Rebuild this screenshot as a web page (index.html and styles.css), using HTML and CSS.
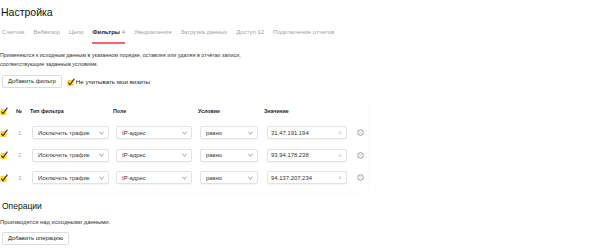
FILE: index.html
```html
<!DOCTYPE html>
<html lang="ru">
<head>
<meta charset="utf-8">
<title>Настройка</title>
<link rel="stylesheet" href="styles.css">
</head>
<body>
<div class="page">
  <h1 class="title">Настройка</h1>
  <nav class="tabs">
    <span class="tab">Счетчик</span>
    <span class="tab">Вебвизор</span>
    <span class="tab">Цели</span>
    <span class="tab active">Фильтры <span class="count">4</span></span>
    <span class="tab">Уведомления</span>
    <span class="tab">Загрузка данных</span>
    <span class="tab">Доступ <span class="count">12</span></span>
    <span class="tab">Подключение отчетов</span>
  </nav>

  <p class="desc filters-desc">Применяются к исходным данным в указанном порядке, оставляя или удаляя в отчётах записи, соответствующие заданным условиям.</p>

  <div class="controls">
    <button class="btn">Добавить фильтр</button>
    <label class="check-label">
      <span class="cb"><svg viewBox="0 0 8 8" width="8" height="8"><rect x="0.5" y="2" width="6" height="6" fill="#ffd333"/><path d="M1.3 4.6 L3 6.6 L7.4 0.6" fill="none" stroke="#3b3320" stroke-width="1.1"/></svg></span>
      Не учитывать мои визиты
    </label>
  </div>

  <div class="panel">
    <div class="grid">
      <div class="cell"><span class="cb"><svg viewBox="0 0 8 8" width="8" height="8"><rect x="0.5" y="2" width="6" height="6" fill="#ffd333"/><path d="M1.3 4.6 L3 6.6 L7.4 0.6" fill="none" stroke="#3b3320" stroke-width="1.1"/></svg></span></div>
      <div class="cell head">№</div>
      <div class="cell head">Тип фильтра</div>
      <div class="cell head">Поле</div>
      <div class="cell head">Условие</div>
      <div class="cell head">Значение</div>
      <div class="cell"></div>

      <div class="cell row"><span class="cb"><svg viewBox="0 0 8 8" width="8" height="8"><rect x="0.5" y="2" width="6" height="6" fill="#ffd333"/><path d="M1.3 4.6 L3 6.6 L7.4 0.6" fill="none" stroke="#3b3320" stroke-width="1.1"/></svg></span></div>
      <div class="cell row num">1</div>
      <div class="cell row"><div class="select w-type"><span class="val">Исключить трафик</span><svg class="arrow" viewBox="0 0 6 4" width="5" height="4"><path d="M0.5 0.8 L3 3.2 L5.5 0.8" fill="none" stroke="#555" stroke-width="0.8"/></svg></div></div>
      <div class="cell row"><div class="select w-field"><span class="val">IP-адрес</span><svg class="arrow" viewBox="0 0 6 4" width="5" height="4"><path d="M0.5 0.8 L3 3.2 L5.5 0.8" fill="none" stroke="#555" stroke-width="0.8"/></svg></div></div>
      <div class="cell row"><div class="select w-cond"><span class="val">равно</span><svg class="arrow" viewBox="0 0 6 4" width="5" height="4"><path d="M0.5 0.8 L3 3.2 L5.5 0.8" fill="none" stroke="#555" stroke-width="0.8"/></svg></div></div>
      <div class="cell row"><div class="input"><span class="val">31.47.191.194</span><span class="clear">×</span></div></div>
      <div class="cell row"><svg class="remove" viewBox="0 0 8 8" width="7" height="7"><circle cx="4" cy="4" r="3.2" fill="none" stroke="#9a9a9a" stroke-width="1.1"/><path d="M2.8 2.8 L5.2 5.2 M5.2 2.8 L2.8 5.2" stroke="#c8c8c8" stroke-width="0.7"/></svg></div>

      <div class="cell row"><span class="cb"><svg viewBox="0 0 8 8" width="8" height="8"><rect x="0.5" y="2" width="6" height="6" fill="#ffd333"/><path d="M1.3 4.6 L3 6.6 L7.4 0.6" fill="none" stroke="#3b3320" stroke-width="1.1"/></svg></span></div>
      <div class="cell row num">2</div>
      <div class="cell row"><div class="select w-type"><span class="val">Исключить трафик</span><svg class="arrow" viewBox="0 0 6 4" width="5" height="4"><path d="M0.5 0.8 L3 3.2 L5.5 0.8" fill="none" stroke="#555" stroke-width="0.8"/></svg></div></div>
      <div class="cell row"><div class="select w-field"><span class="val">IP-адрес</span><svg class="arrow" viewBox="0 0 6 4" width="5" height="4"><path d="M0.5 0.8 L3 3.2 L5.5 0.8" fill="none" stroke="#555" stroke-width="0.8"/></svg></div></div>
      <div class="cell row"><div class="select w-cond"><span class="val">равно</span><svg class="arrow" viewBox="0 0 6 4" width="5" height="4"><path d="M0.5 0.8 L3 3.2 L5.5 0.8" fill="none" stroke="#555" stroke-width="0.8"/></svg></div></div>
      <div class="cell row"><div class="input"><span class="val">93.94.178.238</span><span class="clear">×</span></div></div>
      <div class="cell row"><svg class="remove" viewBox="0 0 8 8" width="7" height="7"><circle cx="4" cy="4" r="3.2" fill="none" stroke="#9a9a9a" stroke-width="1.1"/><path d="M2.8 2.8 L5.2 5.2 M5.2 2.8 L2.8 5.2" stroke="#c8c8c8" stroke-width="0.7"/></svg></div>

      <div class="cell row"><span class="cb"><svg viewBox="0 0 8 8" width="8" height="8"><rect x="0.5" y="2" width="6" height="6" fill="#ffd333"/><path d="M1.3 4.6 L3 6.6 L7.4 0.6" fill="none" stroke="#3b3320" stroke-width="1.1"/></svg></span></div>
      <div class="cell row num">3</div>
      <div class="cell row"><div class="select w-type"><span class="val">Исключить трафик</span><svg class="arrow" viewBox="0 0 6 4" width="5" height="4"><path d="M0.5 0.8 L3 3.2 L5.5 0.8" fill="none" stroke="#555" stroke-width="0.8"/></svg></div></div>
      <div class="cell row"><div class="select w-field"><span class="val">IP-адрес</span><svg class="arrow" viewBox="0 0 6 4" width="5" height="4"><path d="M0.5 0.8 L3 3.2 L5.5 0.8" fill="none" stroke="#555" stroke-width="0.8"/></svg></div></div>
      <div class="cell row"><div class="select w-cond"><span class="val">равно</span><svg class="arrow" viewBox="0 0 6 4" width="5" height="4"><path d="M0.5 0.8 L3 3.2 L5.5 0.8" fill="none" stroke="#555" stroke-width="0.8"/></svg></div></div>
      <div class="cell row"><div class="input"><span class="val">94.137.207.234</span><span class="clear">×</span></div></div>
      <div class="cell row"><svg class="remove" viewBox="0 0 8 8" width="7" height="7"><circle cx="4" cy="4" r="3.2" fill="none" stroke="#9a9a9a" stroke-width="1.1"/><path d="M2.8 2.8 L5.2 5.2 M5.2 2.8 L2.8 5.2" stroke="#c8c8c8" stroke-width="0.7"/></svg></div>
    </div>
  </div>

  <h2 class="subtitle">Операции</h2>
  <p class="desc ops-desc">Производятся над исходными данными.</p>
  <button class="btn">Добавить операцию</button>
</div>
</body>
</html>
```

FILE: styles.css
```css
* { box-sizing: border-box; }
html, body { margin: 0; padding: 0; background: #fff; }
body {
  font-family: "Liberation Sans", Arial, sans-serif;
  color: #222;
  width: 591px;
  height: 250px;
  overflow: hidden;
}
.page { padding: 4px 0 0 0; }
.title {
  margin: 0 0 0 1px;
  font-size: 10.5px;
  line-height: 16px;
  font-weight: normal;
  color: #111;
}
.tabs {
  display: flex;
  gap: 9px;
  margin-left: 2px;
  white-space: nowrap;
}
.tab {
  font-size: 6px;
  line-height: 10px;
  padding: 7px 0 5px;
  color: #a3a3a3;
  border-bottom: 2px solid transparent;
}
.tab.active {
  color: #222;
  font-weight: bold;
  border-bottom-color: #f0666c;
}
.tab .count { font-weight: normal; color: #999; }
.desc {
  margin: 0;
  line-height: 8.5px;
  color: #333;
}
.filters-desc { margin: 7px 0 0 0; max-width: 270px; font-size: 5.4px; }
.controls {
  display: flex;
  align-items: center;
  gap: 5px;
  margin: 7px 0 0 2px;
}
.btn {
  font-family: inherit;
  font-size: 5.9px;
  color: #222;
  background: #fff;
  border: 1px solid #dcdcdc;
  border-radius: 2px;
  height: 13px;
  padding: 0 5px;
  line-height: 11px;
  margin: 0;
}
.check-label {
  display: flex;
  align-items: center;
  gap: 1px;
  font-size: 6.2px;
  color: #222;
}
.cb { display: inline-flex; width: 8px; height: 8px; }
.cb svg { display: block; }
.panel {
  margin-top: 12px;
  width: 368px;
  padding: 0 0 3px 0;
  box-shadow: 0 0 2px rgba(0,0,0,0.06);
  border-radius: 2px;
}
.grid {
  display: grid;
  grid-template-columns: 16px 14px 83px 85px 66px 88px 16px;
  grid-template-rows: 21.5px 22.5px 22.5px 22.5px;
  align-items: center;
}
.cell { font-size: 5.9px; display: flex; align-items: center; }
.head { font-weight: bold; font-size: 5.3px; color: #222; }
.num { color: #aaa; padding-left: 2px; }
.select, .input {
  height: 13px;
  border: 1px solid #e2e2e2;
  border-radius: 2px;
  background: #fff;
  display: flex;
  align-items: center;
  overflow: hidden;
  white-space: nowrap;
  box-shadow: 0 1px 1px rgba(0,0,0,0.04);
}
.select { margin-left: 2px; padding: 0 4px 0 5px; }
.select .val { flex: 1; overflow: hidden; color: #333; }
.select .arrow { flex: none; margin-left: 8px; }
.w-type { width: 77px; }
.w-field { width: 76px; margin-left: 3px; }
.w-cond { width: 58px; }
.input { width: 80px; margin-left: 3px; padding: 0 4px 0 3px; }
.input .val { flex: 1; color: #333; }
.input .clear { color: #ccc; font-size: 7px; }
.remove { margin-left: 5px; }
.subtitle {
  margin: 8px 0 0 2px;
  font-size: 8.5px;
  line-height: 12px;
  font-weight: normal;
  color: #111;
}
.ops-desc { margin-top: 6px; font-size: 5.9px; }
.page > .btn { margin: 5px 0 0 2px; display: block; }
```
